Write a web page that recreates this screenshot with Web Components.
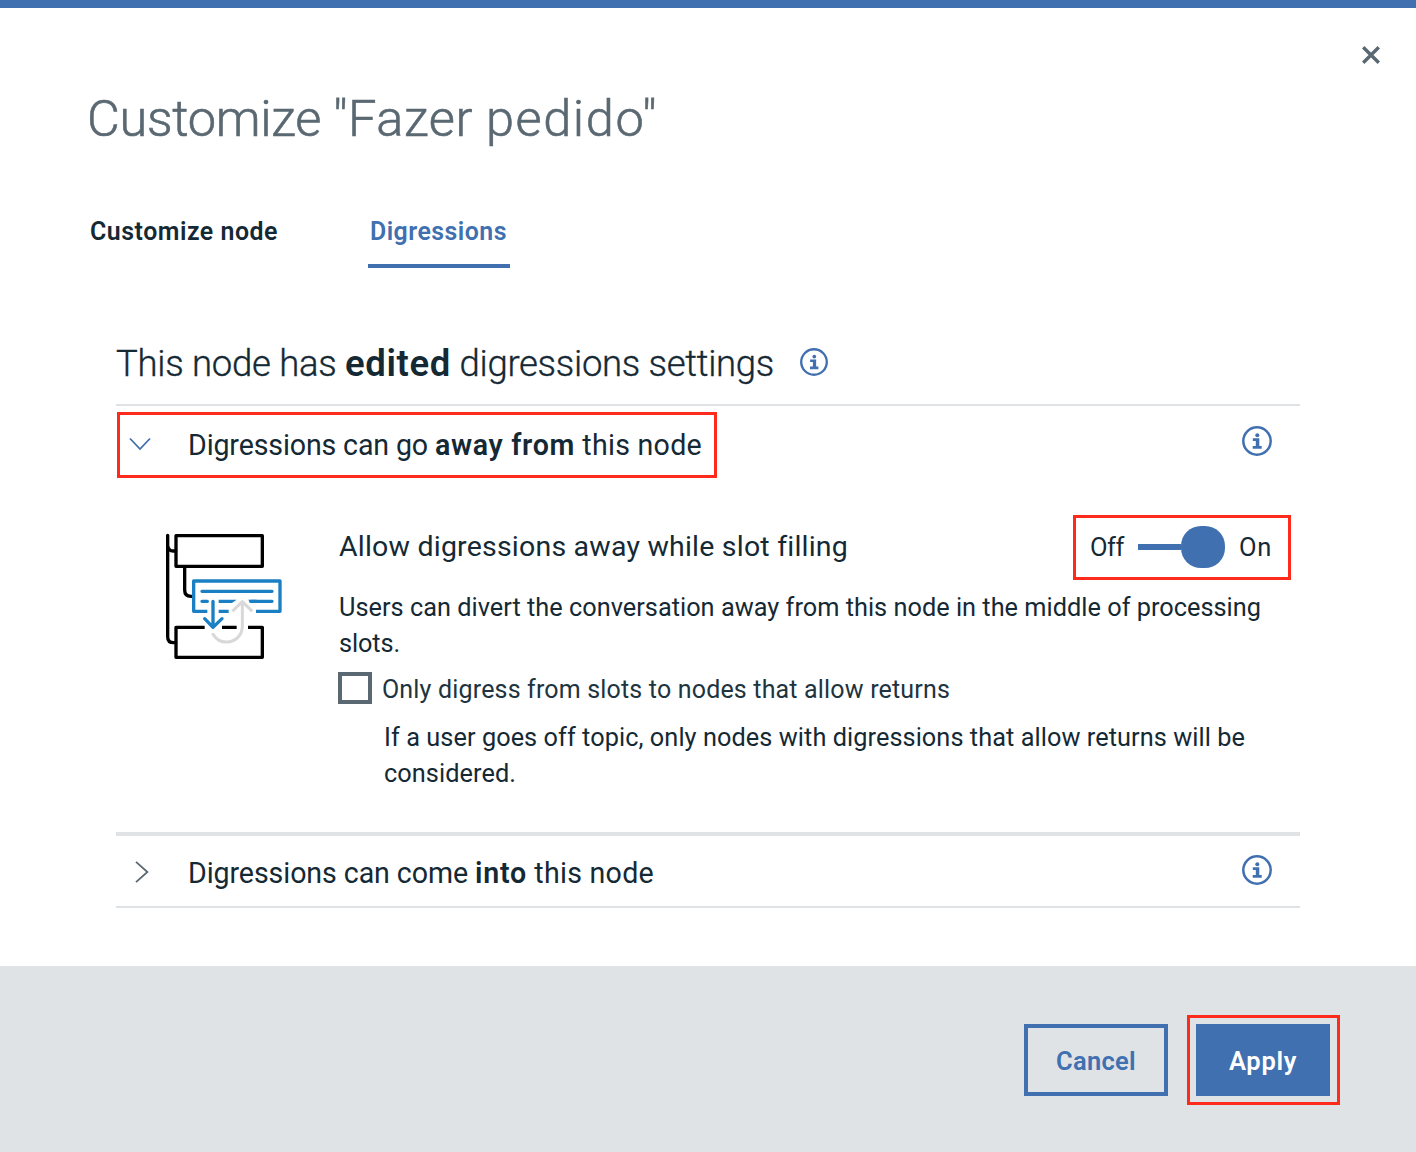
<!DOCTYPE html>
<html lang="en">
<head>
<meta charset="utf-8">
<title>Customize node</title>
<style>
html,body{margin:0;padding:0;background:#fff}
body{--blue:#4070b0;font-family:Roboto,"Noto Sans",sans-serif;color:#152935;width:1416px;height:1152px;overflow:hidden}
</style>
</head>
<body>
<customize-dialog></customize-dialog>
<script>
function define(name, html, ready) {
  customElements.define(name, class extends HTMLElement {
    connectedCallback() {
      if (this.shadowRoot) return;
      const t = document.createElement('template');
      t.innerHTML = html;
      this.attachShadow({mode: 'open'}).appendChild(t.content.cloneNode(true));
      if (ready) ready(this);
    }
  });
}

/* A run of text tracked out to an exact advance width (attribute w). */
define('text-run', `<style>:host{display:inline-block;white-space:pre}</style><slot></slot>`, el => {
  const natural = el.getBoundingClientRect().width;
  el.style.letterSpacing = ((+el.getAttribute('w') - natural) / el.textContent.length).toFixed(4) + 'px';
});

define('info-icon', `<style>:host{display:block;flex:none;width:30px;height:30px;color:var(--blue)}:host([small]){width:28px;height:28px}svg{display:block;width:100%;height:100%}</style>
<svg viewBox="0 0 30 30" fill="none"><circle cx="15" cy="15" r="13.7" stroke="currentColor" stroke-width="2.5"/><circle cx="15.3" cy="9.2" r="2" fill="currentColor"/><path d="M10.8 12.3h6.5v7.6h2.4v2.9h-9v-2.9h3.1v-4.9h-3z" fill="currentColor"/></svg>`);

define('chevron-icon', `<style>:host{display:block;flex:none;width:24px;height:24px;color:#5a6872}:host([open]){color:var(--blue)}path{display:none}:host([open]) .down,:host(:not([open])) .right{display:block}svg{display:block}</style>
<svg width="24" height="24" fill="none" stroke="currentColor" stroke-width="1.8"><path class="down" d="M2 5.5l10 10.5L22 5.5"/><path class="right" d="M8 1.8L19.4 12 8 22.2"/></svg>`);

define('close-button', `<style>:host{display:block;width:18px;height:18px}svg{display:block}</style>
<svg width="18" height="18"><path d="M1.2 1.2l15.6 15.6M16.8 1.2L1.2 16.8" stroke="#5a6872" stroke-width="3.4"/></svg>`);

define('call-out', `<style>:host{display:flex;align-items:center;box-sizing:border-box;border:3px solid #fe2a1c;flex:none}</style><slot></slot>`);

define('tab-item', `<style>:host{display:block;box-sizing:border-box;height:54px;font-size:24.9px;font-weight:600;line-height:36px;border-bottom:4px solid transparent}:host([selected]){color:var(--blue);border-color:var(--blue)}</style><slot></slot>`);

define('toggle-switch', `<style>:host{display:flex;align-items:center;font-size:25.5px;line-height:36px}.track{width:43px;height:6px;background:var(--blue);margin-left:14px}.knob{width:44px;height:42px;border-radius:20px;background:var(--blue);margin-right:14px}</style>
<text-run w="34">Off</text-run><span class="track"></span><span class="knob"></span><text-run w="33">On</text-run>`);

define('check-box', `<style>:host{display:flex;height:32px;align-items:center;font-size:25px}.box{box-sizing:border-box;width:34px;height:32px;border:4px solid #5a6872;margin-right:10px}.label{line-height:34px;padding-top:3px;color:#20343f}</style><span class="box"></span><span class="label"><slot></slot></span>`);

define('dialog-button', `<style>:host{display:flex;align-items:center;justify-content:center;box-sizing:border-box;height:72px;border:4px solid var(--blue);color:var(--blue);font-size:25.5px;font-weight:600;padding-top:1px}:host([primary]){background:var(--blue);color:#fff}</style><slot></slot>`);

define('digression-art', `<style>:host{display:block;width:150px;height:150px}svg{display:block}</style>
<svg width="150" height="150" viewBox="0 0 450 450" fill="none" stroke-linecap="round" stroke-linejoin="round">
<g stroke="#000" stroke-width="10"><path d="M53 46V350Q53 368 71 368H77M53 76Q55 93 70 93H77M104 140V210Q104 229 123 229H128"/><path d="M78 47H337V139H78Z"/><path d="M164 322H78V412H337V322H294M216 322H260" stroke-linecap="butt"/></g>
<g stroke="#1a80c3" stroke-width="10" stroke-linecap="butt"><path d="M172 274H131V183H390V274H318M206 274H236"/><path d="M156 214H366M156 244H172M302 244H366" stroke-linecap="round"/><path d="M206 239H260L246 249H206ZM294 239L306 249H320V239Z" fill="#1a80c3" stroke="none"/></g>
<path d="M189 244V322M164 296L189 322L216 296" stroke="#1a80c3" stroke-width="10"/>
<path d="M189 343C204 366 220 367 233 366C258 364 277 345 277 318V246M250 271L277 245L304 271" stroke="#d8d8d8" stroke-width="9"/></svg>`);

define('digression-panel', `<style>
:host{display:block;box-sizing:border-box;height:354px;padding-top:30px}
.row{display:flex}
digression-art{margin:12px 0 0 34px}
.copy{margin-left:39px;width:961px}
.top{display:flex;height:78px;margin-top:7px}
h3{margin:0;width:734px;font-size:28.5px;line-height:63px;font-weight:400}
call-out{width:218px;height:65px;padding:0 0 1px 14px}
p{margin:0;font-size:25.3px;line-height:36px}
check-box{margin:10px 0 16px -1px}
.hint{margin-left:45px}
.l{display:block}
</style>
<div class="row"><digression-art></digression-art><div class="copy">
<div class="top"><h3><text-run w="508">Allow digressions away while slot filling</text-run></h3><call-out><toggle-switch></toggle-switch></call-out></div>
<p style="margin-top:-3px"><span class="l"><text-run w="922">Users can divert the conversation away from this node in the middle of processing</text-run></span><span class="l"><text-run w="61">slots.</text-run></span></p>
<check-box><text-run w="568">Only digress from slots to nodes that allow returns</text-run></check-box>
<p class="hint"><span class="l"><text-run w="861">If a user goes off topic, only nodes with digressions that allow returns will be</text-run></span><span class="l"><text-run w="132">considered.</text-run></span></p>
</div></div>`);

define('accordion-row', `<style>:host{display:flex;justify-content:space-between;align-items:center;height:70px;padding-right:28px;font-size:28.6px;line-height:36px}</style><slot></slot>`);

define('customize-dialog', `<style>
:host{display:flex;flex-direction:column;width:1416px;height:1152px;box-sizing:border-box;border-top:8px solid var(--blue)}
b{font-weight:600;-webkit-text-stroke:0}
header{display:flex;justify-content:space-between;padding:38px 36px 0 87px;height:168px;box-sizing:border-box}
h1{margin:43px 0 0;font-size:50.5px;line-height:60px;font-weight:300;color:#5a6872;-webkit-text-stroke:.6px #5a6872}
nav{display:flex;margin:38px 0 0 90px;gap:90px}
tab-item:last-child{width:142px;box-sizing:border-box;padding-left:2px}
main{margin:0 116px;height:698px}
h2{margin:0;height:138px;box-sizing:border-box;display:flex;padding-top:76px;border-bottom:2px solid #dfe3e6;font-size:36.5px;line-height:40px;font-weight:300;-webkit-text-stroke:.35px #152935}
h2 info-icon{margin:4px 0 0 26px}
.open{align-items:flex-start;height:72px}
.open call-out{width:600px;height:66px;margin:6px 0 0 1px;padding-left:8px}
.open info-icon{margin-top:20px}
chevron-icon{margin-right:36px}
.item{display:flex;align-items:center}
.second{border-top:4px solid #dfe3e6;border-bottom:2px solid #dfe3e6}
.second .item{padding:2px 0 0 12px}
.second .t{padding-top:1px}
.second info-icon{margin-bottom:2px}
footer{margin-top:auto;height:186px;background:#dfe3e6;box-sizing:border-box;padding:49px 76px 0 0;display:flex;justify-content:flex-end}
footer>dialog-button{width:144px;margin:9px 19px 0 0}
footer call-out{width:153px;height:90px;padding-left:6px}
footer call-out dialog-button{width:134px}
.t{white-space:nowrap}
</style>
<header><h1><text-run w="246">Customize </text-run><text-run w="153">"Fazer </text-run><text-run w="172">pedido"</text-run></h1><close-button></close-button></header>
<nav><tab-item><text-run w="188">Customize node</text-run></tab-item><tab-item selected><text-run w="137">Digressions</text-run></tab-item></nav>
<main>
<h2><span class="t"><text-run w="229">This node has </text-run><b><text-run w="106">edited</text-run></b><text-run w="323"> digressions settings</text-run></span><info-icon small></info-icon></h2>
<accordion-row class="open"><call-out><chevron-icon open></chevron-icon><span class="t"><text-run w="247">Digressions can go </text-run><b><text-run w="140">away from</text-run></b><text-run w="127"> this node</text-run></span></call-out><info-icon></info-icon></accordion-row>
<digression-panel></digression-panel>
<accordion-row class="second"><div class="item"><chevron-icon></chevron-icon><span class="t"><text-run w="287">Digressions can come </text-run><b><text-run w="52">into</text-run></b><text-run w="127"> this node</text-run></span></div><info-icon></info-icon></accordion-row>
</main>
<footer><dialog-button><text-run w="80">Cancel</text-run></dialog-button><call-out><dialog-button primary><text-run w="68">Apply</text-run></dialog-button></call-out></footer>`);
</script>
</body>
</html>
